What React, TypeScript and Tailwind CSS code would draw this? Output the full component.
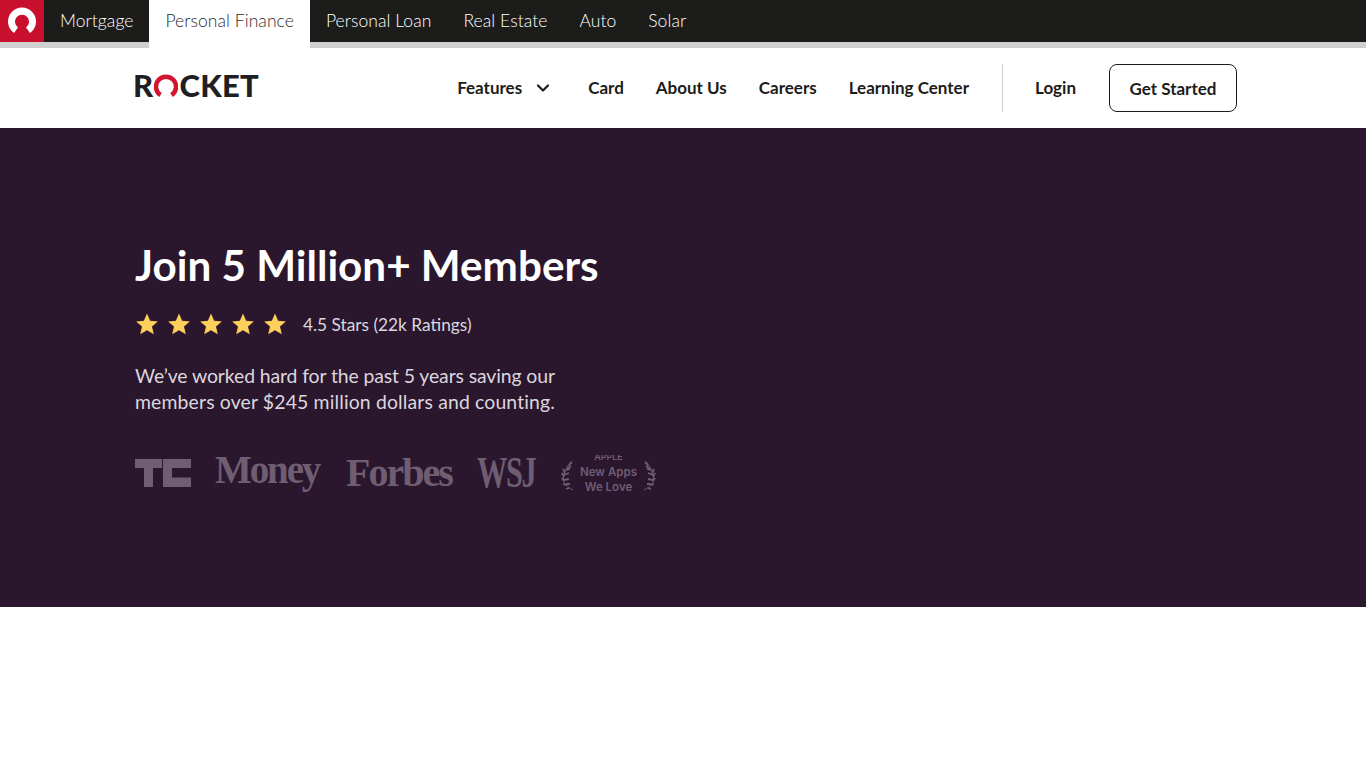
import { ChevronDown } from "lucide-react"

const tabs = ["Mortgage", "Personal Finance", "Personal Loan", "Real Estate", "Auto", "Solar"]
const links = ["Card", "About Us", "Careers", "Learning Center"]

function Star() {
  return (
    <svg viewBox="0 0 24 24" className="h-[24px] w-[24px]" fill="#fdcf5b">
      <path d="M12 1.6l3.1 7.2 7.8.7-5.9 5.1 1.8 7.6L12 18.2l-6.8 4 1.8-7.6-5.9-5.1 7.8-.7z" />
    </svg>
  )
}

function Laurel({ flip }: { flip?: boolean }) {
  return (
    <svg viewBox="0 0 14 32" className={flip ? "h-[32px] w-[14px] -scale-x-100" : "h-[32px] w-[14px]"} fill="none" stroke="#6f5d72">
      <path d="M10 2C4 9 1 16 3 22c1 3 5 6 9 8" strokeWidth="1" />
      <path d="M8 5l3-3M6 9l4-3M4 13L2 9M3 17l-2-4M3 21l-2-3M5 25l-3-1M8 28l-3 1M5 10l4-1M3 15l5-2M3 20l5-1M5 24l4 0" strokeWidth="1.8" />
    </svg>
  )
}

export default function App() {
  return (
    <div className="min-h-[768px] bg-white font-['Lato',sans-serif]">
      <div className="h-[48px] bg-[#d0d0d0]">
        <div className="flex h-[42px] bg-[#1c1c1a] text-[17.5px] font-light tracking-[0.07px] text-white">
          <div className="flex h-[42px] w-[44px] items-center justify-center bg-[#c8102e]">
            <svg viewBox="0 0 28 28" className="h-[28px] w-[28px]">
              <path d="M6 26A14 14 0 1 1 22 26L18 20.500A7 7 0 1 0 10 20.500Z" fill="white" />
            </svg>
          </div>
          {tabs.map((t) => (
            <div
              key={t}
              className={
                t === "Personal Finance"
                  ? "flex h-[48px] items-center bg-white px-4 pb-[6px] text-[#2a2a2a]"
                  : "flex h-[42px] items-center px-4"
              }
            >
              {t}
            </div>
          ))}
        </div>
      </div>

      <div className="flex h-[80px] items-center justify-between pl-[133px] pr-[129px] text-[#1c1c1a]">
        <div className="mb-[6px] flex items-center text-[31px] font-black leading-none tracking-[0.3px] text-[#1f1f23]">
          <span>R</span>
          <svg viewBox="0 0 24 24" className="mx-[1px] h-[24px] w-[24px]">
            <path d="M6.500 22A10 10 0 1 1 17.500 22" fill="none" stroke="#d5152f" strokeWidth="4.5" />
          </svg>
          <span>CKET</span>
        </div>
        <div className="flex items-center text-[17px] font-bold">
          <div className="flex items-center">
            <span>Features</span>
            <ChevronDown className="ml-[11px] h-[20px] w-[20px]" strokeWidth={2.6} />
          </div>
          <div className="ml-[35px] flex items-center gap-[32px]">
            {links.map((l) => (
              <span key={l}>{l}</span>
            ))}
          </div>
          <div className="ml-[33px] mr-[32px] h-[48px] w-px bg-[#d0d0d0]" />
          <span>Login</span>
          <div className="ml-[33px] flex h-[48px] w-[128px] items-center justify-center rounded-[8px] border border-[#1c1c1a] pt-[1px]">
            Get Started
          </div>
        </div>
      </div>

      <div className="h-[479px] bg-[#2a162d] pl-[135px] pt-[113px]">
        <h1 className="text-[42.2px] font-bold leading-[48px] text-white">Join 5 Million+ Members</h1>
        <div className="mt-[23px] flex h-[24px] items-center">
          <div className="flex gap-[8px]">
            <Star />
            <Star />
            <Star />
            <Star />
            <Star />
          </div>
          <span className="ml-[16px] pt-[1px] text-[17.3px] text-[#dcd6de]">4.5 Stars (22k Ratings)</span>
        </div>
        <p className="mt-[27px] text-[19.4px] leading-[26px] text-[#dcd6de]">
          <span className="tracking-[-0.1px]">We’ve worked hard for the past 5 years saving our</span>
          <br />
          <span className="tracking-[0.15px]">members over $245 million dollars and counting.</span>
        </p>
        <div className="mt-[38px] flex h-[40px] items-center text-[#6f5d72]">
          <svg viewBox="0 0 56 28" className="h-[28px] w-[56px]" fill="#6f5d72">
            <path d="M0 0h27v9h-9v19H9V9H0zM28 0h28v9H28zM28 9h9v19h-9zM37 18.500h19V28H37z" />
          </svg>
          <span className="ml-[24px] mb-[8px] w-[107px] origin-left scale-x-[0.95] font-['Liberation_Serif',serif] text-[41px] font-bold leading-none tracking-[-2.2px]">Money</span>
          <span className="ml-[24px] w-[107px] font-['Liberation_Serif',serif] text-[40px] font-bold leading-none tracking-[-2px]">Forbes</span>
          <span className="ml-[24px] w-[58px] origin-left scale-x-[0.69] whitespace-nowrap font-['Liberation_Serif',serif] text-[44px] font-bold leading-none tracking-[-2px]">WSJ</span>
          <div className="ml-[26px] flex items-center self-start">
            <div className="mt-[4px]">
              <Laurel />
            </div>
            <div className="mx-[5px] mt-[2px] h-[40px] overflow-hidden text-center font-['Inter',sans-serif] text-[11.5px] font-semibold leading-[15px]">
              <div className="-mt-[3.5px] mb-[3px] text-[9px] leading-[10px]">APPLE</div>
              New Apps
              <br />
              We Love
            </div>
            <div className="mt-[4px]">
              <Laurel flip />
            </div>
          </div>
        </div>
      </div>
    </div>
  )
}
